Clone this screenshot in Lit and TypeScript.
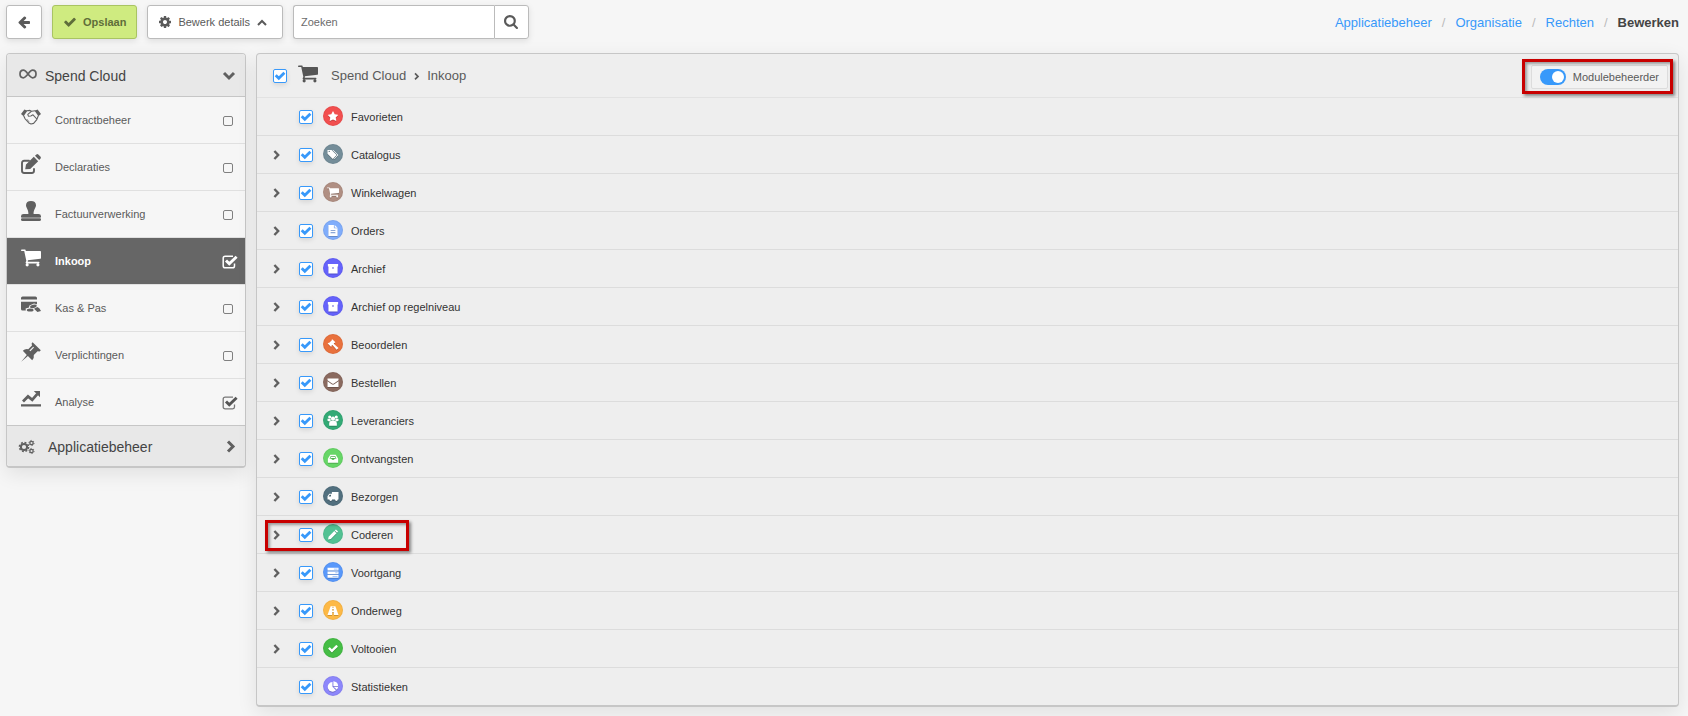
import { LitElement, html, css, svg, nothing } from "lit";
import { customElement, property, state } from "lit/decorators.js";
import { classMap } from "lit/directives/class-map.js";
import { styleMap } from "lit/directives/style-map.js";

const CART =
  "M704 1536q0 52-38 90t-90 38-90-38-38-90 38-90 90-38 90 38 38 90zm896 0q0 52-38 90t-90 38-90-38-38-90 38-90 90-38 90 38 38 90zm128-1088v512q0 24-16.5 42.5t-40.5 21.5l-1044 122q13 60 13 70 0 16-24 64h920q26 0 45 19t19 45-19 45-45 19h-1024q-26 0-45-19t-19-45q0-11 8-31.5t16-36 21.5-40 15.5-29.5l-177-823h-204q-26 0-45-19t-19-45 19-45 45-19h256q16 0 28.5 6.5t19.5 15.5 13 24.5 8 26 5.5 29.5 4.5 26h1201q26 0 45 19t19 45z";
const CHECK =
  "M1671 566q0 40-28 68l-724 724-136 136q-28 28-68 28t-68-28l-136-136-362-362q-28-28-28-68t28-68l136-136q28-28 68-28t68 28l294 295 656-657q28-28 68-28t68 28l136 136q28 28 28 68z";

interface Glyph {
  box: string;
  art: unknown;
}

const line = (d: string, width: number) =>
  svg`<path d=${d} fill="none" stroke="currentColor" stroke-width=${width}></path>`;
const fill = (d: string) => svg`<path d=${d} fill="currentColor" fill-rule="evenodd"></path>`;
const round = (d: string, width: number) =>
  svg`<path d=${d} fill="none" stroke="currentColor" stroke-width=${width} stroke-linecap="round" stroke-linejoin="round"></path>`;

const glyphs: Record<string, Glyph> = {
  back: {
    box: "0 0 1792 1792",
    art: fill(
      "M1664 896v128q0 53-32.5 90.5t-84.5 37.5h-704l293 294q38 36 38 90t-38 90l-75 76q-37 37-90 37-52 0-91-37l-651-652q-37-37-37-90 0-52 37-91l651-650q38-38 91-38 52 0 90 38l75 74q38 38 38 91t-38 91l-293 293h704q52 0 84.5 37.5t32.5 90.5z"
    ),
  },
  check: { box: "100 270 1592 1260", art: fill(CHECK) },
  cog: {
    box: "128 128 1536 1536",
    art: fill(
      "M1152 896q0-106-75-181t-181-75-181 75-75 181 75 181 181 75 181-75 75-181zm512-109v222q0 12-8 23t-20 13l-185 28q-19 54-39 91 35 50 107 138 10 12 10 25t-9 23q-27 37-99 108t-94 71q-12 0-26-9l-138-108q-44 23-91 38-16 136-29 186-7 28-36 28h-222q-14 0-24.5-8.5t-11.5-21.5l-28-184q-49-16-90-37l-141 107q-10 9-25 9-14 0-25-11-126-114-165-168-7-10-7-23 0-12 8-23 15-21 51-66.5t54-70.5q-27-50-41-99l-183-27q-13-2-21-12.5t-8-23.5v-222q0-12 8-23t19-13l186-28q14-46 39-92-40-57-107-138-10-12-10-24 0-10 9-23 26-36 98.5-107.5t94.5-71.5q13 0 26 10l138 107q44-23 91-38 16-136 29-186 7-28 36-28h222q14 0 24.5 8.5t11.5 21.5l28 184q49 16 90 37l142-107q9-9 24-9 13 0 25 10 129 119 165 170 7 8 7 22 0 12-8 23-15 21-51 66.5t-54 70.5q26 50 41 98l183 28q13 2 21 12.5t8 23.5z"
    ),
  },
  search: {
    box: "64 128 1664 1664",
    art: fill(
      "M1216 832q0-185-131.5-316.5t-316.5-131.5-316.5 131.5-131.5 316.5 131.5 316.5 316.5 131.5 316.5-131.5 131.5-316.5zm512 832q0 52-38 90t-90 38q-54 0-90-38l-343-342q-179 124-399 124-143 0-273.5-55.5t-225-150-150-225-55.5-273.5 55.5-273.5 150-225 225-150 273.5-55.5 273.5 55.5 225 150 150 225 55.5 273.5q0 220-124 399l343 343q37 37 37 90z"
    ),
  },
  up: { box: "0 0 10 10", art: line("M1 8 L5 4 L9 8", 2) },
  down: { box: "0 0 14 14", art: line("M2 4 L7 9 L12 4", 3) },
  next: { box: "0 0 14 14", art: line("M6 1.5 L11 6.5 L6 11.5", 3) },
  right: { box: "0 0 10 10", art: line("M1.4 1 L5.2 5 L1.4 9", 2.4) },
  crumb: { box: "0 0 10 10", art: line("M3 2.4 L6 5.4 L3 8.4", 1.7) },
  infinity: {
    box: "0 0 18 10",
    art: line(
      "M9 5 C7 2.4 6 1.2 4.4 1.2 C2.4 1.2 1 2.9 1 5 C1 7.1 2.4 8.8 4.4 8.8 C6 8.8 7 7.6 9 5 C11 2.4 12 1.2 13.6 1.2 C15.6 1.2 17 2.9 17 5 C17 7.1 15.6 8.8 13.6 8.8 C12 8.8 11 7.6 9 5 Z",
      1.7
    ),
  },
  cogs: {
    box: "0 0 16 14",
    art: svg`<circle cx="5" cy="7" r="3.1" fill="none" stroke="currentColor" stroke-width="2"></circle>
      <circle cx="5" cy="7" r="4.6" fill="none" stroke="currentColor" stroke-width="1.5" stroke-dasharray="1.9 1.7"></circle>
      <circle cx="12.5" cy="3" r="1.7" fill="none" stroke="currentColor" stroke-width="1.3"></circle>
      <circle cx="12.5" cy="3" r="2.6" fill="none" stroke="currentColor" stroke-width=".9" stroke-dasharray="1.3 1.4"></circle>
      <circle cx="12.5" cy="11" r="1.7" fill="none" stroke="currentColor" stroke-width="1.3"></circle>
      <circle cx="12.5" cy="11" r="2.6" fill="none" stroke="currentColor" stroke-width=".9" stroke-dasharray="1.3 1.4"></circle>`,
  },
  handshake: {
    box: "0 0 20 20",
    art: svg`${fill("M0 7 L3.4 2.6 L6.4 3.8 L2.6 9.2 Z M20 7 L16.6 2.6 L13.6 3.8 L17.4 9.2 Z")}
      ${round("M5.8 3.8 L9 3.4 L10.6 4.2 L14.2 3.8 M2.8 9 L4.2 12 L7.8 16 L10 17 L12.6 16.4 L15.8 12.6 L17.2 9 M10.4 4.4 L6.8 7.4 L7.4 9.2 L9.8 9 L12 7.8 L15.8 12", 1.1)}
      ${round("M6 12.4 L7.8 14.6", 0.8)}`,
  },
  edit: {
    box: "0 0 20 20",
    art: svg`${fill("M4.2 15.2 L5 10.6 L12.8 2.8 L17.2 7.2 L9.2 15 Z M14 1.8 L15.4 .4 Q16.4 -.4 17.3 .4 L19.6 2.7 Q20.3 3.6 19.6 4.5 L18.2 6 Z")}
      ${round("M8 6.8 H3.2 Q1 6.8 1 9 V16.8 Q1 19 3.2 19 H10.8 Q13 19 13 16.8 V15", 1.9)}`,
  },
  stamp: {
    box: "0 0 20 20",
    art: svg`${fill("M10 0 C6.8 0 5 1.6 5 4.2 C5 6.8 7.6 8.6 7.4 13 H2.6 Q0 13 0 15.2 V16.6 H20 V15.2 Q20 13 17.4 13 H12.6 C12.4 8.6 15 6.8 15 4.2 C15 1.6 13.2 0 10 0 Z M0 17.4 H20 V18.4 Q20 20 18.4 20 H1.6 Q0 20 0 18.4 Z")}
      <rect x="1" y="16.4" width="18" height="1.4" fill="currentColor" opacity=".6"></rect>`,
  },
  cart: { box: "64 256 1664 1408", art: fill(CART) },
  money: {
    box: "0 0 20 20",
    art: svg`${fill("M1.6 1.4 H14.4 Q16 1.4 16 3 V4.6 H0 V3 Q0 1.4 1.6 1.4 Z M0 6.8 H16 V9.2 L13 8.6 L8.4 10.4 L8 12.4 L4.6 13.4 L4.8 15.6 H1.6 Q0 15.6 0 14 Z")}
      <ellipse cx="12.4" cy="11.4" rx="3.4" ry="1.6" transform="rotate(-14 12.4 11.4)" fill="currentColor"></ellipse>
      <ellipse cx="9.2" cy="15" rx="3.4" ry="1.6" fill="currentColor"></ellipse>
      ${fill("M13 13.8 L16.4 12 Q18.8 13 20 16 L16.4 17 Z")}`,
  },
  pin: {
    box: "0 0 20 20",
    art: fill(
      "M11.6 .2 L19.8 8.2 L18.6 9.4 L16.6 9.2 L12.8 13 Q13.4 16 11.2 18.2 L6.9 14.1 L.2 19.8 L5.8 13 L1.8 8.8 Q4 6.6 7.2 7.2 L11 3.4 L10.6 1.4 Z M8.4 8.6 L9.4 9.2 L13 5.6 L12.2 4.8 Z"
    ),
  },
  chart: {
    box: "0 0 20 20",
    art: svg`${line("M2 12.4 L7 7.4 L11.2 10.8 L16.4 4.8", 2.8)}
      ${fill("M12.8 2 H19 V8.2 Z M0 15.2 H20 V17.4 H0 Z")}`,
  },
  star: {
    box: "0 0 1792 1792",
    art: fill(
      "M1728 647q0 22-26 48l-363 354 86 500q1 7 1 20 0 21-10.5 35.5t-30.5 14.5q-19 0-40-12l-449-236-449 236q-22 12-40 12-21 0-31.5-14.5t-10.5-35.5q0-6 2-20l86-500-364-354q-25-27-25-48 0-37 56-46l502-73 225-455q19-41 49-41t49 41l225 455 502 73q56 9 56 46z"
    ),
  },
  tags: {
    box: "0 0 12 12",
    art: svg`${fill("M0 1 H4.4 L10 6.6 L5.8 10.8 L0 5.2 Z M1.2 2.6 A.7 .7 0 1 0 2.6 2.6 A.7 .7 0 1 0 1.2 2.6 Z")}
      ${line("M6 1.2 L11.4 6.6 L7.4 10.8", 0.9)}`,
  },
  file: {
    box: "0 0 12 12",
    art: fill("M1 0 H7 V3.6 H11 V12 H1 Z M7.8 0 L11 2.9 H7.8 Z M3.4 5.4 V6.4 H8.6 V5.4 Z M3.4 8 V9 H8.6 V8 Z"),
  },
  archive: { box: "0 0 12 12", art: fill("M.4 1 H11.6 V3.8 H.4 Z M1 3.8 H11 V11.4 H1 Z M5 5 V5.9 H7 V5 Z") },
  gavel: {
    box: "0 0 12 12",
    art: fill("M5.2 .2 L8.6 3.6 L7.8 4.4 L7.4 4.2 L6.8 5.2 L12 9.8 L10 11.8 L5.4 6.6 L4.4 7.2 L4.6 7.8 L3.8 8.4 L.2 5 L1 4.2 L1.6 4.4 L4.8 1.4 L4.4 1 Z"),
  },
  mail: {
    box: "0 0 12 12",
    art: fill("M0 1.6 H12 V3.6 L7 7.2 Q6 7.8 5 7.2 L0 3.6 Z M0 4.5 L4.6 7.9 Q6 8.8 7.4 7.9 L12 4.5 V11 H0 Z"),
  },
  users: {
    box: "0 0 12 12",
    art: svg`<circle cx="2.4" cy="2.2" r="1.7" fill="currentColor"></circle><circle cx="9.6" cy="2.2" r="1.7" fill="currentColor"></circle>
      <circle cx="6" cy="4" r="2.3" fill="currentColor"></circle>
      ${fill("M0 4.2 H3.4 V6.8 H.8 Q0 6.8 0 6 Z M12 4.2 H8.6 V6.8 H11.2 Q12 6.8 12 6 Z M1.8 11.6 V9 Q2 6.4 4 6.4 H8 Q10 6.4 10.2 9 V11.6 Z")}`,
  },
  inbox: {
    box: "0 0 12 12",
    art: fill("M3 1.8 H9 L11.6 6.4 V10.6 H.4 V6.4 Z M3.6 3.2 L2.2 6.2 H4.2 L5 7.6 H7 L7.8 6.2 H9.8 L8.4 3.2 Z M4 4 H8 L8.6 5.4 H3.4 Z"),
  },
  truck: {
    box: "0 0 12 12",
    art: fill(
      "M4.8 1.2 H12 V9.4 H11.2 A1.5 1.5 0 1 1 8.2 9.4 H5 A1.5 1.5 0 1 1 2 9.4 H0 V5.8 L2 3 H4.8 Z M1.2 5.9 H3.8 V4.1 H2.5 Z"
    ),
  },
  pencil: { box: "0 0 12 12", art: fill("M.6 11.4 L1.2 8.4 L7.4 2.2 L9.8 4.6 L3.6 10.8 Z M8 1.6 L9.2 .5 L11.5 2.8 L10.4 4 Z") },
  tasks: {
    box: "0 0 12 12",
    art: svg`${fill("M0 .8 H12 V3.8 H0 Z M0 4.8 H12 V7.8 H0 Z M0 8.8 H12 V11.8 H0 Z")}
      <path d="M7 2.3 H11 M8.5 6.3 H11 M5.5 10.3 H11" stroke="#5898fb" stroke-width=".6"></path>`,
  },
  road: {
    box: "0 0 12 12",
    art: fill("M3.4 1.4 H8.6 L12 10.8 H7 L6.8 7.6 H5.2 L5 10.8 H0 Z M5.5 2 L5.4 3.4 H6.6 L6.5 2 Z M5.3 4.4 L5.2 6.4 H6.8 L6.7 4.4 Z"),
  },
  tick: { box: "0 0 1792 1792", art: fill(CHECK) },
  pie: {
    box: "0 0 12 12",
    art: fill("M5.4 1 V6.4 L9.2 10.2 A5.3 5.3 0 1 1 5.4 1 Z M6.4 .2 A5.3 5.3 0 0 1 11.6 5.4 H6.4 Z M6.8 6.4 H11.6 A5 5 0 0 1 10.2 9.6 Z"),
  },
};

@customElement("ui-icon")
export class UiIcon extends LitElement {
  @property() name = "";

  static styles = css`
    :host {
      display: inline-flex;
      flex: none;
    }
    svg {
      display: block;
      width: 100%;
      height: 100%;
      overflow: visible;
    }
  `;

  render() {
    const glyph = glyphs[this.name];
    return glyph ? html`<svg viewBox=${glyph.box} aria-hidden="true">${glyph.art}</svg>` : nothing;
  }
}

const modules = [
  { label: "Contractbeheer", icon: "handshake", on: false },
  { label: "Declaraties", icon: "edit", on: false },
  { label: "Factuurverwerking", icon: "stamp", on: false },
  { label: "Inkoop", icon: "cart", on: true, active: true },
  { label: "Kas & Pas", icon: "money", on: false },
  { label: "Verplichtingen", icon: "pin", on: false },
  { label: "Analyse", icon: "chart", on: true },
];

const rights = [
  { label: "Favorieten", icon: "star", color: "#f24f4f", leaf: true },
  { label: "Catalogus", icon: "tags", color: "#748d99" },
  { label: "Winkelwagen", icon: "cart", color: "#b08f83" },
  { label: "Orders", icon: "file", color: "#80adfb" },
  { label: "Archief", icon: "archive", color: "#6562fb" },
  { label: "Archief op regelniveau", icon: "archive", color: "#6562fb" },
  { label: "Beoordelen", icon: "gavel", color: "#e9713d" },
  { label: "Bestellen", icon: "mail", color: "#8a6a5f" },
  { label: "Leveranciers", icon: "users", color: "#33aa76" },
  { label: "Ontvangsten", icon: "inbox", color: "#67d667" },
  { label: "Bezorgen", icon: "truck", color: "#52707f" },
  { label: "Coderen", icon: "pencil", color: "#52c193", marked: true },
  { label: "Voortgang", icon: "tasks", color: "#5898fb" },
  { label: "Onderweg", icon: "road", color: "#fdb946" },
  { label: "Voltooien", icon: "tick", color: "#45bd45" },
  { label: "Statistieken", icon: "pie", color: "#8d87fb", leaf: true },
];

@customElement("app-root")
export class AppRoot extends LitElement {
  @state() private manager = true;

  static styles = css`
    :host {
      display: block;
      box-sizing: border-box;
      min-height: 100vh;
      padding: 5px 9px 9px 6px;
      background: #f6f6f6;
      color: #5a5a5a;
      font: 11px/16px "Liberation Sans", Arial, sans-serif;
    }
    *,
    *::before {
      box-sizing: border-box;
    }
    button,
    input {
      margin: 0;
      font: inherit;
      color: inherit;
    }
    a {
      color: #3899fa;
      text-decoration: none;
    }
    .bar {
      display: flex;
      align-items: center;
      gap: 10px;
      margin-bottom: 14px;
    }
    .button {
      display: flex;
      align-items: center;
      justify-content: center;
      gap: 7px;
      height: 34px;
      padding: 0 11px;
      border: 1px solid #bbb;
      border-radius: 3px;
      background: #fff;
      box-shadow: 0 2px 6px rgba(0, 0, 0, 0.1);
    }
    .square {
      width: 36px;
      padding: 0;
    }
    .save {
      padding: 0 10px 0 11px;
      border-color: #a9c463;
      background: #cfeb80;
      color: #5f6e3a;
      font-weight: bold;
    }
    .details {
      padding: 0 15px 0 11px;
    }
    .search {
      display: flex;
      border-radius: 3px;
      box-shadow: 0 2px 6px rgba(0, 0, 0, 0.1);
    }
    .search input {
      width: 201px;
      height: 34px;
      padding: 0 7px;
      border: 1px solid #bbb;
      border-right: 0;
      border-radius: 3px 0 0 3px;
      background: #fff;
      outline: none;
    }
    .search input::placeholder {
      color: #6c6c6c;
      opacity: 1;
    }
    .search .button {
      width: 35px;
      padding: 0;
      border-radius: 0 3px 3px 0;
      box-shadow: none;
    }
    .crumbs {
      display: flex;
      gap: 10px;
      margin-left: auto;
      padding-top: 2px;
      font-size: 13px;
    }
    .crumbs .sep {
      color: #bbb;
    }
    .crumbs .here {
      color: #444;
      font-weight: bold;
    }
    .i10 {
      width: 10px;
      height: 10px;
    }
    .i12 {
      width: 12px;
      height: 12px;
    }
    .i14 {
      width: 14px;
      height: 14px;
    }
    .i20 {
      width: 20px;
      height: 18px;
    }
    .body {
      display: grid;
      grid-template-columns: 240px minmax(0, 1fr);
      align-items: start;
      gap: 10px;
    }
    .panel {
      border: 1px solid #c6c6c6;
      border-bottom-width: 2px;
      border-radius: 4px;
      box-shadow: 0 6px 20px rgba(0, 0, 0, 0.09);
    }
    .side {
      background: #f6f6f6;
    }
    .group {
      display: flex;
      align-items: center;
      width: 100%;
      height: 43px;
      padding: 1px 9px 0 12px;
      gap: 8px;
      border: 0;
      border-bottom: 1px solid #c6c6c6;
      border-radius: 3px 3px 0 0;
      background: #e8e8e8;
      color: #444;
      font-size: 14px;
      text-align: left;
    }
    .group .name {
      flex: 1;
    }
    .group ui-icon {
      color: #606060;
    }
    .group.last {
      height: 40px;
      gap: 13px;
      border-bottom: 0;
      border-radius: 0 0 3px 3px;
    }
    .infinity {
      width: 18px;
      height: 10px;
      margin-bottom: 4px;
    }
    .cogs {
      width: 16px;
      height: 14px;
    }
    .modules,
    .rights {
      margin: 0;
      padding: 0;
      list-style: none;
    }
    .module {
      display: flex;
      align-items: center;
      height: 47px;
      padding: 0 7px 0 14px;
      border-bottom: 1px solid #e0e0e0;
    }
    .module:last-child {
      border-bottom-color: #c6c6c6;
    }
    .module ui-icon {
      width: 20px;
      height: 20px;
      margin-bottom: 6px;
      color: #606060;
    }
    .module label {
      flex: 1;
      padding-left: 14px;
    }
    .module.active {
      background: #666;
      color: #fff;
      font-weight: bold;
    }
    .module.active ui-icon {
      color: #fff;
    }
    .pick {
      appearance: none;
      width: 16px;
      height: 14px;
      margin-top: 2px;
      background: no-repeat center / 16px 14px
        url("data:image/svg+xml,%3Csvg xmlns='http://www.w3.org/2000/svg' viewBox='0 0 16 14'%3E%3Crect x='1.5' y='2.5' width='9' height='9' rx='1.5' fill='none' stroke='%23808080'/%3E%3C/svg%3E");
    }
    .pick:checked {
      background-image: url("data:image/svg+xml,%3Csvg xmlns='http://www.w3.org/2000/svg' viewBox='0 0 16 14'%3E%3Cpath d='M12.5 8.5V11Q12.5 12.8 10.7 12.8H3.2Q1.2 12.8 1.2 11V3Q1.2 1.2 3.2 1.2H11' fill='none' stroke='%23777' stroke-width='1.3'/%3E%3Cpath d='M4 5.4L7.3 8.8L14.6 1.8' fill='none' stroke='%23555' stroke-width='2.9'/%3E%3C/svg%3E");
    }
    .active .pick:checked {
      background-image: url("data:image/svg+xml,%3Csvg xmlns='http://www.w3.org/2000/svg' viewBox='0 0 16 14'%3E%3Cpath d='M12.5 8.5V11Q12.5 12.8 10.7 12.8H3.2Q1.2 12.8 1.2 11V3Q1.2 1.2 3.2 1.2H11' fill='none' stroke='%23fff' stroke-width='1.5'/%3E%3Cpath d='M4 5.4L7.3 8.8L14.6 1.8' fill='none' stroke='%23fff' stroke-width='2.9'/%3E%3C/svg%3E");
    }
    .main {
      background: #eee;
    }
    .head {
      display: flex;
      align-items: center;
      height: 44px;
      padding: 0 10px 0 16px;
      border-bottom: 1px solid #e2e2e2;
      font-size: 13px;
    }
    .head .i20 {
      margin: 0 13px 4px 11px;
      color: #555;
    }
    .head .i10 {
      margin: 0 5px 0 6px;
    }
    .box {
      appearance: none;
      flex: none;
      width: 14px;
      height: 14px;
      border: 1px solid #3899fa;
      border-radius: 2px;
      background: #fff;
      box-shadow: 0 2px 5px rgba(0, 0, 0, 0.1);
    }
    .box:checked {
      background: #fff no-repeat center / 12px 12px
        url("data:image/svg+xml,%3Csvg xmlns='http://www.w3.org/2000/svg' viewBox='0 0 12 12'%3E%3Cpath d='M1.7 5.2L4.8 8.3L10.4 2.7' fill='none' stroke='%233899fa' stroke-width='2.8'/%3E%3C/svg%3E");
    }
    .toggle {
      position: relative;
      display: flex;
      align-items: center;
      gap: 7px;
      height: 24px;
      margin: 2px 0 0 auto;
      padding: 0 8px;
      border: 1px solid #dcdcdc;
      border-radius: 2px;
      background: #f2f2f2;
      font-size: 11px;
    }
    .switch {
      appearance: none;
      display: flex;
      width: 26px;
      height: 16px;
      padding: 2px;
      border-radius: 8px;
      background: #bbb;
    }
    .switch::before {
      content: "";
      width: 12px;
      height: 12px;
      border-radius: 50%;
      background: #fff;
    }
    .switch:checked {
      justify-content: flex-end;
      background: #3899fa;
    }
    .mark {
      position: absolute;
      border: 3px solid #c80000;
      box-shadow: 2px 2px 3px rgba(0, 0, 0, 0.45), inset 2px 2px 3px rgba(0, 0, 0, 0.35);
      pointer-events: none;
    }
    .toggle .mark {
      inset: -7px -6px -6px -10px;
    }
    .right .mark {
      left: 8px;
      top: 4px;
      width: 144px;
      height: 31px;
    }
    .right {
      position: relative;
      display: grid;
      grid-template-columns: 26px 14px 20px 1fr;
      align-items: center;
      height: 38px;
      padding-left: 16px;
      border-bottom: 1px solid #dcdcdc;
      color: #333;
    }
    .right:last-child {
      height: 37px;
      border-bottom: 0;
    }
    .expand {
      display: flex;
      width: 10px;
      height: 16px;
      align-items: center;
      padding: 0;
      border: 0;
      background: none;
      color: #606060;
    }
    .right .box {
      grid-column: 2;
    }
    .badge {
      display: flex;
      align-items: center;
      justify-content: center;
      width: 20px;
      height: 20px;
      margin: 0 0 2px 10px;
      border-radius: 50%;
      box-shadow: inset 0 0 0 1px rgba(0, 0, 0, 0.05);
      color: #fff;
    }
    .badge ui-icon {
      width: 12px;
      height: 11px;
      margin-top: 2px;
      filter: drop-shadow(0 1px 0 rgba(0, 0, 0, 0.2));
    }
    .right label {
      padding-left: 18px;
    }
  `;

  render() {
    return html`
      <header class="bar">
        <button class="button square" aria-label="Terug"><ui-icon class="i14" name="back"></ui-icon></button>
        <button class="button save"><ui-icon class="i12" name="check"></ui-icon>Opslaan</button>
        <button class="button details">
          <ui-icon class="i12" name="cog"></ui-icon>Bewerk details<ui-icon class="i10" name="up"></ui-icon>
        </button>
        <form class="search" @submit=${(e: Event) => e.preventDefault()}>
          <input type="text" placeholder="Zoeken" aria-label="Zoeken" />
          <button class="button" aria-label="Zoek"><ui-icon class="i14" name="search"></ui-icon></button>
        </form>
        <nav class="crumbs">
          <a href="#applicatiebeheer">Applicatiebeheer</a><span class="sep">/</span>
          <a href="#organisatie">Organisatie</a><span class="sep">/</span>
          <a href="#rechten">Rechten</a><span class="sep">/</span>
          <span class="here">Bewerken</span>
        </nav>
      </header>
      <div class="body">
        <aside class="panel side">
          <button class="group" aria-expanded="true">
            <ui-icon class="infinity" name="infinity"></ui-icon><span class="name">Spend Cloud</span>
            <ui-icon class="i14" name="down"></ui-icon>
          </button>
          <ul class="modules">
            ${modules.map(
              (m, i) => html`<li class=${classMap({ module: true, active: !!m.active })}>
                <ui-icon name=${m.icon}></ui-icon>
                <label for="module-${i}">${m.label}</label>
                <input class="pick" type="checkbox" id="module-${i}" ?checked=${m.on} />
              </li>`
            )}
          </ul>
          <button class="group last" aria-expanded="false">
            <ui-icon class="cogs" name="cogs"></ui-icon><span class="name">Applicatiebeheer</span>
            <ui-icon class="i14" name="next"></ui-icon>
          </button>
        </aside>
        <main class="panel main">
          <div class="head">
            <input class="box" type="checkbox" id="all" aria-label="Alle rechten van Inkoop" checked />
            <ui-icon class="i20" name="cart"></ui-icon>
            <span>Spend Cloud</span><ui-icon class="i10" name="crumb"></ui-icon><span>Inkoop</span>
            <div class="toggle">
              <input
                class="switch"
                type="checkbox"
                role="switch"
                id="manager"
                .checked=${this.manager}
                @change=${(e: Event) => (this.manager = (e.target as HTMLInputElement).checked)}
              />
              <label for="manager">Modulebeheerder</label>
              <span class="mark"></span>
            </div>
          </div>
          <ul class="rights">
            ${rights.map(
              (r, i) => html`<li class="right">
                ${r.leaf
                  ? nothing
                  : html`<button class="expand" aria-label="${r.label} uitklappen">
                      <ui-icon class="i10" name="right"></ui-icon>
                    </button>`}
                <input class="box" type="checkbox" id="right-${i}" checked />
                <span class="badge" style=${styleMap({ backgroundColor: r.color })}>
                  <ui-icon name=${r.icon}></ui-icon>
                </span>
                <label for="right-${i}">${r.label}</label>
                ${r.marked ? html`<span class="mark"></span>` : nothing}
              </li>`
            )}
          </ul>
        </main>
      </div>
    `;
  }
}
